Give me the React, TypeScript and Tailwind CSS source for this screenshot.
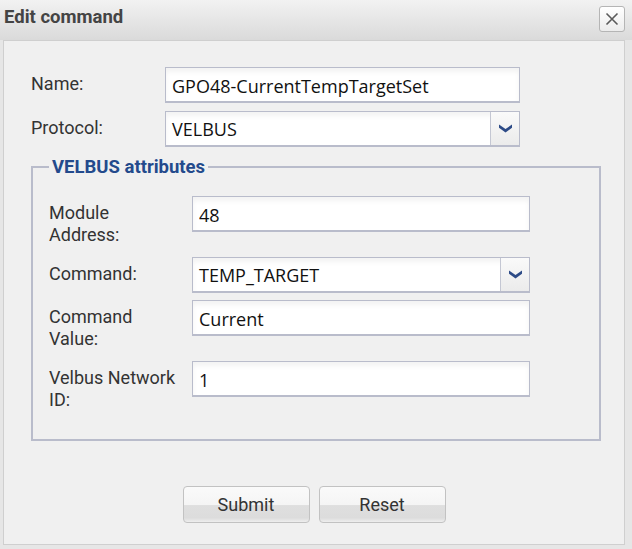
import type { ReactNode } from "react";

const labelCls = "shrink-0 pt-[6px] pb-[4px] text-[18px] leading-[22px] text-[#333]";
const inputCls =
  "h-[36px] border border-[#b9bccb] border-b-2 bg-white px-[6px] pt-[2px] text-[18px] text-[#111] outline-none shadow-[inset_0_4px_5px_rgba(0,0,0,0.05)] [font-family:'Open_Sans',sans-serif]";

function Chevron() {
  return (
    <svg width="13" height="9" viewBox="0 0 13 9">
      <path d="M0 0.5 L6.5 5 L13 0.5 L13 3.8 L6.5 8.5 L0 3.8 Z" fill="#2d4b87" />
    </svg>
  );
}

function Select({ value, width }: { value: string; width: string }) {
  return (
    <div className={`${width} flex h-[36px] border border-[#b9bccb] border-b-2 bg-white shadow-[inset_0_4px_5px_rgba(0,0,0,0.05)]`}>
      <div className="flex flex-1 items-center px-[6px] pt-[2px] text-[18px] text-[#111] [font-family:'Open_Sans',sans-serif]">{value}</div>
      <div className="flex w-[29px] items-center justify-center border-l border-[#c4c7d3] bg-[linear-gradient(to_bottom,#fafafa,#ebebeb)]">
        <Chevron />
      </div>
    </div>
  );
}

function Row({ label, labelWidth, gap, children }: { label: string; labelWidth: string; gap: string; children: ReactNode }) {
  return (
    <div className={`flex items-start ${gap}`}>
      <div className={`${labelCls} ${labelWidth}`}>{label}</div>
      {children}
    </div>
  );
}

function Button({ children }: { children: ReactNode }) {
  return (
    <button
      type="button"
      className="h-[37px] w-[127px] rounded-[4px] border border-[#c2c2c2] bg-[linear-gradient(to_bottom,#fafafa_0%,#f5f5f5_50%,#dfdfdf_53%,#dcdcdc_88%,#eeeeee_100%)] text-[18px] text-[#333]"
    >
      {children}
    </button>
  );
}

export default function App() {
  return (
    <div className="h-[549px] w-[632px] overflow-hidden bg-[#e6e6e6] [font-family:Roboto,sans-serif]">
      <div className="flex h-[40px] items-start justify-between bg-[linear-gradient(to_bottom,#f2f2f2,#dadada)] pl-[4px] pr-[7px]">
        <h2 className="pt-[5px] text-[18.5px] leading-[24px] font-bold text-[#444]">Edit command</h2>
        <button
          type="button"
          className="mt-[6px] flex h-[26px] w-[26px] items-center justify-center rounded-[3px] border border-[#b5b5b5] bg-[linear-gradient(to_bottom,#ffffff,#ececec)]"
        >
          <svg width="14" height="14" viewBox="0 0 14 14">
            <path d="M1.5 1.5 L12.5 12.5 M12.5 1.5 L1.5 12.5" stroke="#5a5a5a" strokeWidth="1.6" />
          </svg>
        </button>
      </div>

      <div className="ml-[3px] flex h-[505px] w-[622px] flex-col border border-[#cfcfcf] bg-[#f0f0f0]">
        <div className="pt-[26px] pl-[27px]">
          <Row label="Name:" labelWidth="w-[134px]" gap="mb-[8px]">
            <input readOnly defaultValue="GPO48-CurrentTempTargetSet" className={`${inputCls} w-[355px]`} />
          </Row>
          <Row label="Protocol:" labelWidth="w-[134px]" gap="">
            <Select value="VELBUS" width="w-[355px]" />
          </Row>

          <fieldset className="mt-[8px] h-[286px] w-[570px] border-2 border-[#b9bccb] px-[16px] pt-[17px]">
            <legend className="px-[3px] text-[18.5px] leading-[24px] font-bold text-[#234a8c]">VELBUS attributes</legend>
            <Row label="Module Address:" labelWidth="w-[143px] pr-[60px]" gap="mb-[7px]">
              <input readOnly defaultValue="48" className={`${inputCls} w-[338px]`} />
            </Row>
            <Row label="Command:" labelWidth="w-[143px]" gap="mb-[7px]">
              <Select value="TEMP_TARGET" width="w-[338px]" />
            </Row>
            <Row label="Command Value:" labelWidth="w-[143px] pr-[60px]" gap="mb-[7px]">
              <input readOnly defaultValue="Current" className={`${inputCls} w-[338px]`} />
            </Row>
            <Row label="Velbus Network ID:" labelWidth="w-[143px]" gap="">
              <input readOnly defaultValue="1" className={`${inputCls} w-[338px]`} />
            </Row>
          </fieldset>
        </div>

        <div className="mt-[45px] flex justify-center gap-[9px]">
          <Button>Submit</Button>
          <Button>Reset</Button>
        </div>
      </div>
    </div>
  );
}
